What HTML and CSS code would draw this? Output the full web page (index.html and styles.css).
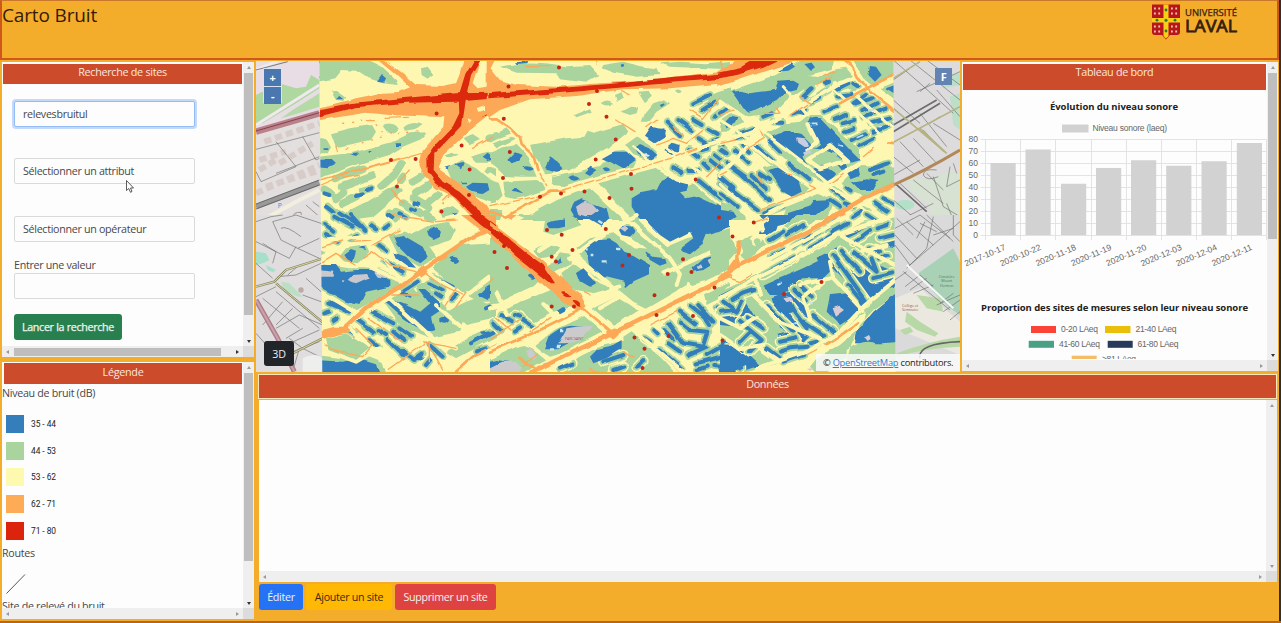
FILE: index.html
```html
<!DOCTYPE html>
<html lang="fr">
<head>
<meta charset="utf-8">
<title>Carto Bruit</title>
<link rel="stylesheet" href="styles.css">
</head>
<body>
<div class="app">
<header class="top">
  <h1>Carto Bruit</h1>
  <svg class="logo" viewBox="0 0 88 36" role="img" aria-label="Université Laval">
    <path d="M0 .5H28V28Q28 31 25 31H18L14 35.500L10 31H3Q0 31 0 28Z" fill="#b9151c"/>
    <path d="M11.500 .5H16.500V32L14 34.500L11.500 32ZM0 14H28V18.500H0Z" fill="#f9cf16"/>
    <g fill="#237a3a"><circle cx="14" cy="6" r="1.400"/><circle cx="14" cy="16.200" r="1.500"/><circle cx="14" cy="27" r="1.400"/><circle cx="5" cy="16.200" r="1.400"/><circle cx="23" cy="16.200" r="1.400"/></g>
    <path d="M2 4.500H10M2 9.500H10M19 4.500H27M19 9.500H27M2 22.500H10M2 27.500H10M19 22.500H27M19 27.500H27" stroke="#efc9a4" stroke-width="1.800" stroke-dasharray="1.800 2.500"/>
    <text x="33" y="12" class="lg1" textLength="52" lengthAdjust="spacingAndGlyphs">UNIVERSITÉ</text>
    <text x="33" y="27.500" class="lg2" textLength="52" lengthAdjust="spacingAndGlyphs">LAVAL</text>
  </svg>
</header>
<div class="main">
  <aside class="side">
    <section class="panel search">
      <div class="view">
        <h2>Recherche de sites</h2>
        <form class="form">
          <div class="field focus">relevesbruitul</div>
          <div class="field">Sélectionner un attribut</div>
          <div class="field">Sélectionner un opérateur</div>
          <label>Entrer une valeur</label>
          <div class="field last"></div>
          <button type="button" class="btn green">Lancer la recherche</button>
        </form>
      </div>
      <div class="vbar"><i class="up"></i><b></b><i class="down dark"></i></div>
      <div class="hbar"><i class="left"></i><b></b><i class="right dark"></i></div>
      <div class="corner"></div>
    </section>
    <section class="panel legend">
      <div class="view">
        <h2>Légende</h2>
        <p>Niveau de bruit (dB)</p>
        <ul>
          <li><span class="sw c1"></span>35 - 44</li>
          <li><span class="sw c2"></span>44 - 53</li>
          <li><span class="sw c3"></span>53 - 62</li>
          <li><span class="sw c4"></span>62 - 71</li>
          <li><span class="sw c5"></span>71 - 80</li>
        </ul>
        <p class="routes">Routes</p>
        <svg class="line" viewBox="0 0 20 20"><path d="M.5 19.500L19 .5" stroke="#444" stroke-width=".9"/></svg>
        <p class="site">Site de relevé du bruit</p>
      </div>
      <div class="vbar"><i class="up"></i><b></b><i class="down dark"></i></div>
      <div class="hbar"><i class="left"></i><i class="right"></i></div>
      <div class="corner"></div>
    </section>
  </aside>
  <div class="center">
    <div class="upper">
      <div class="map">
<svg class="mapsvg" viewBox="256 61 704 311" preserveAspectRatio="none">
<defs><clipPath id="zone"><path d="M319.500 61H893.300L895.500 372H322.300Z"/></clipPath>
<filter id="organic" filterUnits="userSpaceOnUse" x="250" y="55" width="716" height="323" color-interpolation-filters="sRGB"><feTurbulence type="fractalNoise" baseFrequency=".07" numOctaves="1" seed="4"/><feDisplacementMap in="SourceGraphic" scale="5" xChannelSelector="R" yChannelSelector="G"/><feGaussianBlur stdDeviation=".45"/></filter>
<g id="shapeA"><path d="M205 388L225 400M240 415L262 398M260 430L300 410M320 392L345 385M215 440L235 460M240 455L265 470M290 460L330 440M345 455L380 425M400 460L420 475M420 455L450 470M440 430L490 460M470 415L520 445M510 465L530 475M470 365L495 350M480 400L520 375M520 425L545 405"/></g>
<g id="shapeB"><path d="M530 185L570 225M565 180L605 210M610 180L635 195M610 130L660 105M635 150L675 125M675 170L715 140M700 200L720 180M655 210L680 225M625 235L650 250M655 255L680 240M695 260L712 280M600 270L625 290M635 270L655 265M660 300L690 325M640 310L655 325M675 285L690 297M550 325L575 340M595 330L625 330M630 365L690 415M690 370L715 385"/></g>
<g id="shapeC"><path d="M315 70L330 65M350 88L385 70M355 110L395 105M400 70L412 78M300 105L325 90M250 110L275 85M270 125L300 112M310 155L350 140M345 180L375 165M365 190L400 180M220 160L255 145M375 215L400 205M395 240L435 220M420 255L460 235M430 150L470 130M410 130L455 115M430 170L500 145M455 190L510 175M460 215L510 195M400 130L435 105M130 170L155 160M160 185L190 185M60 220L100 205M50 235L75 225M0 160L20 145M5 270L20 280M45 270L85 310M70 255L90 275M110 260L155 300M150 245L180 275M20 310L75 350M60 340L150 420M95 345L140 385M120 340L150 360M0 350L40 385M30 385L115 450M0 400L50 440M205 310L265 360M450 330L505 310M460 345L490 335M380 385L395 395M340 390L370 415M330 420L360 440M375 430L400 440M400 470L430 450M440 455L455 475M465 430L500 455M490 415L520 430M130 460L190 440"/></g>
<g id="shapeD"><path d="M205 25L235 50M235 5L290 35M250 -5L315 35M285 0L325 45M345 30L360 40M385 40L400 30M210 60L245 80M280 70L300 60M370 90L390 105M385 140L440 170M220 265L280 290M205 295L220 290M230 320L245 310M350 290L415 325M270 340L295 355M305 310L325 325M330 335L350 350M340 375L365 395M365 345L390 360M395 375L440 420M415 350L445 375M440 410L475 435M430 340L465 365M480 430L500 415M510 450L530 425M520 390L560 425M445 225L485 200M430 230L460 245M520 205L560 225M530 185L590 215M540 235L555 245M590 250L605 235M645 385L710 350M660 410L690 400M690 280L700 275"/></g>
<g id="shapeE"><path d="M35 300L65 320M75 300L90 305M10 325L30 345M75 350L90 340M100 315L130 335M465 370L480 380M490 345L500 355M525 345L550 370M535 385L570 410M510 405L575 460M535 325L580 385L640 395L655 350L600 345L570 320M570 290L615 325M600 270L650 310M625 270L670 320M640 300L660 330M595 420L650 395M620 445L710 420M650 420L720 380M620 465L650 455M670 450L720 455M340 440L400 420M210 460L250 445M370 465L400 455M440 455L460 435M690 285L720 230M680 280L710 310"/></g>
<g id="shapeF"><path d="M130 180L220 130M155 125L190 105M150 75L190 50M200 60L250 30M220 95L270 60M270 100L340 60M340 50L385 25M250 80L300 50M320 40L350 20M380 60L440 30M400 80L430 65M450 100L480 110M430 60L450 45M480 130L500 120M440 0L470 20M470 40L500 30M480 70L520 60M340 120L440 260M365 110L420 170M405 115L470 170L455 130M460 190L520 175M35 255L70 235L100 225M10 260L50 290L65 260M0 290L40 285M85 310L130 340M60 320L125 375L90 410M140 270L220 350M200 260L260 340M220 220L260 260M240 210L275 245M280 300L340 350M250 320L310 360M180 380L230 370M180 410L210 400L260 395M140 400L190 440L250 420M30 430L60 460M20 400L70 430M60 380L90 350M270 385L290 380M385 210L430 265"/></g>
</defs>
<!-- Fond de carte -->
<rect x="256" y="61" width="704" height="311" fill="#e2dfde"/>
<g transform="translate(256 60) scale(.33333)">
  <path d="M0 0H190V170L0 225Z" fill="#e8dde5"/>
  <path d="M0 105L70 70 120 85 150 80 165 45 190 60V85L120 130 20 190 0 190Z" fill="#afd7a0"/><path d="M75 175L110 150 190 100V140L110 165Z" fill="#b4daa5"/>
  <path d="M0 195L190 75M0 30L70 0" stroke="#f0e9ed" stroke-width="9"/><path d="M0 30L95 5" stroke="#444" stroke-width="2"/>
  <path d="M0 215L190 160" stroke="#b9828b" stroke-width="20"/><path d="M0 213L190 158" stroke="#8a3f4b" stroke-width="3"/>
  <g stroke="#d8ccc9" stroke-width="18" stroke-dasharray="22 12"><path d="M25 245L190 190M10 300L90 275M70 310L170 250M0 400L190 315M10 330L60 300M30 380L180 335"/></g>
  <path d="M0 268L190 218M60 245L120 320 15 365 0 335M140 230L180 300 190 295M60 340L190 290" class="rd"/>
  <path d="M0 440L190 368" stroke="#999" stroke-width="17"/><path d="M0 432L190 360M0 447L190 375" stroke="#4f4f4f" stroke-width="2"/>
  <path d="M20 480L130 420 190 390" stroke="#f3efdf" stroke-width="12"/><path d="M150 435L190 470M170 425L190 440M110 475q0-20 25-18q5 14-15 20" class="rd"/>
  <path d="M190 0L202 42 190 52" stroke="#3975bb" stroke-width="3" fill="none"/><text x="65" y="444" class="park">P</text>
</g>
<g transform="translate(256 215) scale(.33333)">
  <path d="M0 0H200V470H0Z" fill="#dfdddd"/>
  <path d="M0 110L30 115 40 135 20 145 0 150Z" fill="#a6dfca"/><path d="M30 150L60 165 50 172 35 165Z" fill="#a6dfca"/><path d="M75 200L100 205 140 245 125 245 85 225Z" fill="#bbdfc5"/><circle cx="135" cy="225" r="8" fill="#bba9a6"/>
  <g class="rd"><path d="M0 20L45 5 80 0M50 20L120 0 195 25M50 20L75 75 125 100 190 70M75 40q15-10 60 25M125 100L190 130M120 95L100 130 0 80M20 85L60 110 50 145M0 145L50 190M65 185L120 180 195 145M95 180L130 150M0 245L60 215M20 250L130 340M60 230L190 340M80 260L20 330M110 280L60 330M0 355L40 400M60 340L130 300 200 330M90 390L190 345M140 340L90 370M110 410L190 380M100 370L140 400 200 430M130 400L110 470M150 190L195 230M140 240L195 260"/></g>
  <path d="M0 215L55 200 90 165 200 130M60 205L200 322M60 440L200 370" stroke="#8b895f" stroke-width="7" fill="none"/><path d="M0 215L55 200 90 165 200 130M60 205L200 322M60 440L200 370" stroke="#d9d6ae" stroke-width="3" fill="none"/>
  <path d="M0 255L65 370 115 470" stroke="#ae7e89" stroke-width="15" fill="none"/><path d="M0 255L65 370 115 470" stroke="#c9a3ad" stroke-width="6" fill="none"/>
  <path d="M140 430Q180 410 200 430V470H140Z" fill="#eeeeec"/>
</g>
<g transform="translate(720 60) scale(.33333)">
  <path d="M510 0H720V480H510Z" fill="#dddbdc"/><path d="M690 110L720 100V210L700 195ZM660 50L720 40V75L670 85Z" fill="#bcdfc8"/><path d="M560 350L620 360 690 330 720 345V480H640L620 430 570 390Z" fill="#d7e2d2"/><ellipse cx="555" cy="435" rx="28" ry="15" fill="#b2e1c7"/>
  <g class="rd"><path d="M520 0L600 70 700 160M570 0L720 120M620 0L720 75M590 95L720 35M520 60L570 25M630 70L600 95M650 90L720 170M520 120L600 190M600 160L680 260M640 190L720 240M580 235L650 310M540 245L610 320M520 290L580 340M610 210L670 275M520 345L600 300M660 170L630 190M540 370L620 445M620 340L670 390M580 360L670 430M640 350L670 440 720 470M690 320L680 380 720 360M700 310L710 340M650 330q-40-5-40 15q10 20 45 5M520 420L590 480M560 470L640 430M680 430L700 480"/></g>
  <path d="M520 215L660 130M520 195L650 120M525 370L620 455" stroke="#6d6d6d" stroke-width="5"/><path d="M520 247L720 140M520 55L600 5M520 145L680 280M600 205L680 280" stroke="#b5b382" stroke-width="5"/><path d="M520 375Q610 335 720 270" stroke="#b38858" stroke-width="9" fill="none"/>
</g>
<g transform="translate(720 215) scale(.33333)">
  <path d="M515 0H720V470H515Z" fill="#dbdada"/><path d="M595 175L700 100 720 140V300L690 280 640 230Z" fill="#a9d1b6"/><path d="M525 250L600 220 720 320V420L600 370 525 340Z" fill="#ebe9df"/><path d="M555 320L560 290 600 320 655 355 645 365 590 345ZM540 345L570 335 580 350 555 360ZM530 415Q620 380 720 365V395Q610 400 530 425ZM590 240L660 250 670 290 620 280Z" fill="#b9d8a7"/>
  <g class="rd"><path d="M525 40L600 0M560 20L640 90M600 0L690 70M640 5L620 100 560 160M525 90L570 150 720 20M525 60L590 130M590 70L615 20M640 60L700 40M550 170L690 285M525 195L560 170M555 215L600 180 640 215M570 225L620 190M580 235L640 210M650 270L720 240M670 290L720 255M660 265L700 235M690 315L720 290M700 0V60L720 80M620 0L700 80M530 10L580 60M600 25L650 50"/></g>
  <path d="M560 150L700 280" stroke="#f7f7f7" stroke-width="6"/><path d="M600 430Q590 385 720 380" stroke="#666" stroke-width="5" fill="none"/>
  <text x="680" y="188" class="mp g1">Cimetière</text><text x="680" y="202" class="mp g1">Mount</text><text x="680" y="216" class="mp g1">Hermon</text><text x="570" y="275" class="mp r1">Collège et</text><text x="570" y="289" class="mp r1">Séminaire</text>
</g>
<!-- Niveaux de bruit -->
<g clip-path="url(#zone)">
<g filter="url(#organic)">
<path d="M250 50H910V380H250Z" class="y"/>
<g transform="translate(256 60) scale(.33333)">
  <path class="g" d="M170 -10H320L372 15 420 58 425 75 380 70 335 55 300 32 255 30 235 55 190 65H170ZM225 95Q245 88 268 110L262 122 240 120ZM495 25L515 20 532 42 515 56 497 45ZM380 198Q400 180 428 205 420 222 395 218ZM225 220L290 203 348 195 360 215 345 240 240 262ZM170 235H210L225 262 215 280H170ZM170 292L290 278 420 242 465 220 515 217 495 238 440 260 400 285 300 315 190 355H170ZM445 203Q470 180 497 195 480 210 450 212ZM285 455L400 385 425 375 438 395 350 470 280 480ZM620 235L650 222 675 240 640 256ZM565 285L590 275 608 285 580 292ZM575 325L615 303 660 325 720 375V435L650 405 590 360ZM645 290L695 275 720 280V305L660 305ZM550 450L590 435 610 450 600 475H560ZM695 320L720 330V360L685 335Z"/>
  <path d="M435 312L415 345 375 380M240 355L320 325M300 365L350 345M260 380L300 365M435 360L442 350M700 235L720 225" class="gs"/>
  <use href="#shapeA" class="gs"/><path d="M210 440l20 15M235 460l25 12M205 400l15 5M395 465l15 10M430 460l20 12M465 445l12 5M475 430l12 4M300 408l20-5M335 390l12-5" class="bs"/>
  <path class="b" d="M360 65L375 45 390 58 385 68ZM240 118L250 108 262 118ZM180 300L225 298 240 312 215 325 180 320ZM283 283L310 280 300 288ZM415 250h20v8h-15ZM680 290L695 278 712 292 695 300ZM595 315L620 308 612 328ZM565 323l18-5-5 10ZM630 380L650 368 695 370 700 390 680 402 645 395ZM615 365h18v5h-15ZM588 462l15-4-5 12ZM205 265h12v5h-10ZM338 270h8v5h-8Z"/>
  <path class="o" d="M170 148L300 115 380 98 430 96 465 82 420 40 360 -10H375L440 40 480 75 560 78 600 70 612 40 625 -10H675L650 70 665 85 720 75V150L640 212 562 285 545 325 610 370 690 435 720 480H655L590 410 540 385 505 350 490 315 500 272 562 200 565 172 400 165 330 158 170 184Z"/>
  <path class="y" d="M665 30Q690 0 720 10V70L670 68ZM665 145L690 135 690 150 670 155ZM635 175l12 5-8 10Z"/>
  <path class="os" d="M190 360L290 335 440 295 500 280M430 295L300 330 195 375M405 390L440 430M460 330L425 370M540 355L590 390 560 420M240 260L245 275M310 345L260 355M650 265L710 230M390 175L460 172M330 182h25"/><path class="os" stroke-dasharray="3 24" d="M260 190L350 180 380 220 500 215M270 265L380 230M400 300L480 290M560 430L600 380 650 430"/>
  <path class="r" d="M170 152L280 130 420 116 600 100 720 98V115L600 125 450 128 300 142 170 174ZM660 -10H678L645 45 632 105 618 195 575 240 532 285 530 330 560 365 610 395 660 440 685 480H665L600 415 540 370 515 335 514 290 540 252 590 200 610 160 608 110 628 45Z"/><path d="M680 172L705 157" stroke="#dc260b" stroke-width="3"/>
</g>
<g transform="translate(490 60) scale(.33333)">
  <path class="g" d="M30 20Q120 0 230 22L300 18 325 45 290 65 210 55 200 40 80 38ZM340 15L400 5 460 20 500 25 508 45 440 50 370 38 335 25ZM510 10L570 5 650 10 720 3V28L650 25 540 20ZM120 255L230 235 280 230 290 212 310 218 400 192 415 215 330 285 250 330 190 350 165 340 130 280ZM250 165L300 145 305 155 260 172ZM332 132q20-15 38 0q-20 15-38 0ZM445 98L480 95 485 110 465 130ZM392 155L420 140 445 142 440 160 420 165ZM455 185L465 160 490 130 525 118 540 130 500 155 475 185ZM555 92q10-8 20 2q-8 12-20-2ZM375 105l20-8 5 15-20 12ZM0 280L40 262 80 255 115 290 140 350 90 350 45 348 15 320 0 310ZM0 360L30 370 45 400 25 420 0 435ZM40 365L140 360 170 375 165 390 120 405 70 430 45 415ZM0 450L40 450 30 480H0ZM90 480L220 410 300 385 400 480ZM325 370L510 320 590 380 610 370 690 440 720 450V480H430L380 430ZM185 375L190 352 260 335 330 318 375 272 400 270 440 300 430 320 330 345 220 378ZM405 255L440 230 480 255 500 275 500 295 470 300 430 285ZM20 220l30-15 15 15-40 15ZM5 250l60-20 15 5-60 30ZM650 110L720 85V100L655 140Z"/>
  <use href="#shapeB" class="gs"/><use href="#shapeB" class="bs"/>
  <path class="b" d="M465 230L485 200 525 210 520 235 495 250ZM433 265L450 252 480 265 502 285 485 298 445 285ZM335 295L370 275 410 275 437 300 400 328 360 305ZM165 325L180 292 200 305 222 330 200 335ZM285 340L305 320 322 330 300 348ZM238 352q20-15 33 5q-20 12-33-5ZM338 325q15-8 23 5q-15 10-23-5ZM55 300L75 280 95 288 85 302 65 310ZM97 322q20-8 35 5q-15 12-35-5ZM65 395L75 385 100 403ZM425 415L450 400 500 390 515 360 535 350 595 372 590 395 570 400 585 415 620 408 690 440 720 448V480H450L425 440ZM242 450L250 430 275 418 305 428 350 445 358 480H260ZM490 210l30-5 5 25-30 15ZM520 270L545 248 572 255 570 275 545 285ZM75 7L118 3 115 10 80 12ZM395 14l8-3 3 7-8 4ZM510 135l15-8 3 8-15 6Z"/>
  <path d="M258 440L285 422 310 430 328 450 295 475 265 462Z" fill="#ccc6cb"/><path d="M445 265q-7 0-5 5q10 5 5-5M460 282q10-5 20 2q-10 7-20-2" fill="#d7edf0"/>
  <path class="yw" d="M0 345L30 365 45 415 90 425M165 345L240 335 400 240 460 200 510 170M430 260L500 320 560 360 600 370M300 380L400 470M560 280L720 410M510 250L610 320"/>
  <path class="yr" d="M0 440L180 400 330 360 560 290 720 230M0 190L45 190 95 250 140 300 165 370 180 400"/>
  <path class="om" d="M0 178L20 178 60 205 90 235 95 255 135 290 145 330M50 470L180 395 220 395M0 455L50 470"/><path class="os" stroke-dasharray="28 8" d="M150 340L170 380M215 390L560 290 620 265M0 440L180 400"/><path class="os" d="M380 180L435 215M470 200L500 178M500 255L550 235 590 250 640 210M600 150L640 175 690 110 720 130M550 200L580 225M720 60L690 0M650 350L690 310M320 0V15M110 20h70M395 92l25 12"/>
  <path class="o" d="M-10 0H15L2 25 30 60 80 75 200 80 330 70 500 60 720 32V68L540 85 400 88 260 108 120 118 30 150 0 170H-10Z"/>
  <path class="r" d="M-5 100L220 83 400 68 540 55 720 38V55L560 67 420 80 200 100 -5 115Z"/>
</g>
<g transform="translate(720 60) scale(.33333)">
  <path class="g" d="M0 105L80 75 170 45 260 -10H345L335 30 260 50 300 55 340 30 390 20 430 65 400 100 350 60 300 70 250 90 200 120 160 160 80 170 20 130 0 125ZM390 -10H540V50L460 80 435 60 410 20ZM480 85L540 60V130ZM130 225L200 190 240 185 265 165 300 165 420 270 420 310 380 325 350 360 310 365 250 340 200 300 150 260ZM130 320L170 310 235 350 265 385 240 415 190 400 150 350ZM0 425L30 435 80 470 80 480H0ZM190 470L200 440 300 400 340 420 320 480H190ZM365 370L420 315 540 320V370L440 410 380 390ZM0 180L30 160 60 170 70 190 20 215 0 215ZM470 360l50-20h20v25l-60 20Z"/>
  <use href="#shapeC" class="gs"/><use href="#shapeC" class="bs"/>
  <path class="b" d="M35 95L60 92 90 100 165 90 175 65 220 62 237 72 230 90 190 100 170 120 90 158 70 145 50 115ZM170 35L215 10 225 20 205 32ZM250 12L275 8 285 22 270 33ZM445 45L450 18 468 20 485 45 465 65ZM497 85L540 70V110ZM155 230L195 213 245 225 285 265 300 255 262 190 270 172 300 175 390 270 420 300 385 310 330 275 280 265 250 290 265 315 240 295 190 255ZM270 330L310 315 345 340 325 362 300 358ZM345 305L380 310 385 325 365 330ZM385 340L415 322 420 345 395 355ZM395 365L440 358 475 362 460 390 420 390ZM145 330L180 320 235 360 245 395 215 410 190 395ZM12 190L30 170 52 175 45 190 20 205ZM0 450L40 455 50 470 35 480H0ZM205 460L265 440 280 420 325 418 325 435 280 470 270 480H205ZM215 155L240 140 260 150 250 165Z"/>
  <path class="yr" d="M265 195L290 245 265 270M265 300L330 255 385 305 350 310 300 325 265 300"/><path class="g" d="M275 298L320 270 350 280 355 300 320 300 300 315Z"/>
  <path class="yw" d="M0 120L110 200 240 300 330 375M345 90L540 275M190 80L265 165M0 240L90 250 150 300 280 390M110 250L0 180M400 100L540 225M0 370L110 470M330 380L420 440 470 480"/>
  <path class="yr" d="M0 250L130 200 260 130 360 70 410 50M380 20L440 90 520 140M440 90L540 40M0 345L80 260M110 480L280 390 400 320 540 240M320 480L540 365"/>
  <path class="om" d="M365 0L395 20 410 50 440 85 540 165M440 85L540 35M360 130L440 85M505 250L540 255"/><path class="ob" d="M320 480L440 410 540 365"/><path class="os" d="M0 250L50 240M130 160L180 160 170 145M210 165L260 130M290 75L340 50M80 265L130 235 120 210M120 450L290 385 265 375M330 370L370 340M430 290L460 265M0 345L20 335M110 335L130 370M190 340L215 345M0 165L40 150M240 110l30 20M310 50l40-18"/>
  <path d="M230 235L255 238 268 255 255 262 235 248ZM252 278l20-10 5 10-20 8Z" fill="#c8cde2"/><path d="M275 193h18M355 255l12 4M410 230l20-8M445 150h15M478 200h8" stroke="#bfe3ee" stroke-width="5"/>
  <path class="o" d="M-5 35L60 -10H235L215 8 150 30 90 48 -5 80Z"/><path class="r" d="M-5 38L60 25 115 -8H190L130 20 60 42 -5 56Z"/>
</g>
<g transform="translate(256 215) scale(.33333)">
  <path class="g" d="M400 60L430 40 520 90 545 125 490 155 430 120ZM465 60L520 30 580 20 600 45 580 75 530 95 480 85ZM530 160L560 125 620 90 720 85V165L620 240ZM180 145L280 160 370 160 430 190 430 215 390 235 300 290 180 220ZM370 245L430 230 520 285 560 260 620 320 610 350 520 370 440 340ZM580 285L630 260 660 250 720 280V310L630 330ZM620 235L710 180 720 190V260L670 260ZM570 410L640 365 720 330V365L600 430ZM210 370L270 355 340 400 300 430 220 415ZM180 420L260 430 330 420 380 440 395 490H180ZM480 215L510 200 540 240 500 260ZM180 95L210 110 180 125ZM250 125L270 100 330 90 340 110 300 150 270 145ZM430 235L470 220 530 265 500 285Z"/>
  <use href="#shapeD" class="gs"/><use href="#shapeD" class="bs"/>
  <path class="b" d="M415 65L440 60 500 95 515 125 490 145 460 125 425 90ZM412 112L450 125 480 158 455 155 420 130ZM510 50L530 35 555 50 550 65 530 75 515 65ZM580 130q15-12 30 5q-10 20-30-5ZM265 120L285 105 300 110 290 145 275 135ZM308 100L325 92 330 105ZM180 150L240 150 255 170 300 165 360 165 400 195 400 215 330 230 310 270 270 260 180 210ZM385 260L410 255 450 270 490 290 520 265 490 225 510 225 555 265 555 285 525 305 535 345 520 350 480 335 430 300ZM550 310q15-10 30 5q-10 20-30 5ZM665 240L690 215 715 200 710 230 695 255ZM180 435L260 440 310 430 360 445 375 490H180ZM220 255L285 285 270 295 225 270ZM480 425q10-10 25 0q-10 15-25 0ZM675 350L700 346 700 355 680 357Z"/>
  <path d="M190 165L232 170 230 185 190 185ZM275 195L290 180 330 177 338 188 300 205ZM355 170L380 172 392 190 365 185ZM255 195l8 2-6 6Z" fill="#c9c9cd"/>
  <path class="yr" d="M430 230L270 330 180 375M545 138L560 130M390 240L530 370 600 400M345 90L430 190M180 135L340 155 435 200M500 165L620 240M580 280L720 175M180 222L310 300M540 270L620 340 720 320M490 370L560 470M270 330L420 470M180 395L300 440 370 400M180 80L420 50 620 0"/>
  <path class="ob" d="M180 370L260 345 330 280 430 215 500 165 560 125 640 70 720 35"/><path class="o" d="M180 350L235 335 270 335 285 350 240 360 180 378ZM485 165L500 150 515 170 495 185ZM545 130L565 118 575 130 555 142Z"/><path class="om" d="M600 470L650 425 720 390"/><path class="os" d="M400 460L510 380 540 430 560 465M500 380L600 400M200 140L240 115 300 150M320 130L350 110 400 150 480 170M345 75L280 80M210 390L250 410 320 425 350 390 300 340M505 170L560 210 620 240M600 275L630 235M570 270L600 220M410 240L490 240M340 310L440 380M410 0L540 20 600 15M200 95L260 75M520 380V440M350 90L430 45"/>
  <path class="o" d="M615 0H720V65L680 50Z"/><path class="r" d="M640 0H680L720 30V55L680 35Z"/>
</g>
<g transform="translate(490 215) scale(.33333)">
  <path class="g" d="M0 40L60 80 120 150 150 195 130 215 40 260 0 265ZM130 105Q165 80 210 100 200 125 150 130ZM175 155L210 115 245 120 245 145 190 170ZM165 15L260 5 275 30 190 60 160 50ZM80 0H220L180 10 120 15ZM210 175L250 145 330 205 365 220 310 235 260 225 220 200ZM260 100L300 70 370 55 430 100 530 110 600 170 590 210 470 280 430 260 380 220 320 190 265 125ZM395 20L430 5 530 95 590 70 720 40V170L610 210 560 180 480 110 400 50ZM45 280L180 225 250 275 190 290 100 345 50 310ZM310 280L380 245 430 275 445 285 350 345 300 300ZM130 395L200 340 280 300 340 350 250 405 180 425ZM190 485L300 400 410 375 410 410 340 485ZM0 420L100 390 150 410 170 440 150 460 0 485ZM400 365L430 345 470 380 570 490H410ZM520 180l60-30 15 50-50 10ZM0 180L20 190 20 230 0 240ZM440 65q20-10 35 0q-10 25-35 0ZM640 230l60-25 20 0v30l-70 35Z"/>
  <use href="#shapeE" class="ys"/><use href="#shapeE" class="gs"/><use href="#shapeE" class="bs"/>
  <path class="b" d="M170 22L190 15 225 10 225 35 205 40 180 40ZM245 0H350L355 15 335 35 300 15ZM387 45L400 30 425 35 435 50 420 65 395 60ZM455 0H720V35L650 60 640 85 600 118 575 110 570 100 610 70 600 50 540 80 510 60 480 30ZM278 98L310 82 330 72 355 70 380 85 400 110 430 120 480 150 480 175 435 195 405 220 400 200 340 185 300 150 295 120ZM467 110L490 125 525 130 530 145 510 152 480 135ZM605 160L640 130 680 120 680 140 640 165 610 170ZM257 175L280 160 310 190 318 205 300 215 265 195ZM110 180q15-10 28 5q-12 15-28-5ZM200 285L220 272 228 285 210 295ZM165 400L180 360 210 340 240 332 280 335 240 380 205 400ZM300 425L320 405 360 395 395 375 395 400 350 430 310 445ZM0 440L20 435 60 440 90 490H0ZM200 140l15-10 2 12-12 6Z"/>
  <path d="M205 385L230 340 260 335 308 332 300 345 285 360 270 380 220 385ZM0 460L40 440 80 440 95 455 80 490H0ZM105 405L120 400 140 425 130 435 115 425ZM390 40l15-8 10 8-10 10ZM650 135l15-8 5 15-15 5ZM620 155l10-7 5 10-10 5ZM275 0H290L300 8Z" fill="#cbcbce"/><path d="M290 103h6M305 120h8M335 142h15M378 102h10M180 400h12M210 345h10M325 20l12 8M200 393h10" stroke="#c6e6f2" stroke-width="7"/>
  <path class="yr" d="M190 80L280 35M150 105L190 80 250 115 370 220 450 285M400 0L540 130 570 175 560 210M240 130L350 50 440 0M520 175L600 140 720 85M280 265L350 230 385 215M330 280L390 245M0 280L140 215M20 235L50 300M190 300L160 270M400 320L580 470M450 300L520 350M110 380L170 430"/>
  <path class="yx" d="M0 415L280 285M140 470L370 355 720 180M270 270L370 355"/>
  <path class="ob" d="M90 490L250 410 370 355 480 300 720 182"/><path class="om" d="M0 410L150 345 280 280L370 355M85 425L130 460"/>
  <path class="o" d="M0 20L60 65 150 130 210 185 270 235 290 275 260 290 220 260 160 210 90 145 0 65ZM350 350L375 340 390 355 370 375ZM50 0H80L65 12Z"/>
  <path class="r" d="M0 32L50 65 110 115 160 150 195 205 180 205 130 165 80 125 0 52ZM213 230Q230 225 245 242 225 248 213 230ZM248 255Q270 252 275 278 255 278 248 255Z"/>
  <path class="os" d="M0 370L60 330 95 315M60 345L20 310M400 410L430 430M480 330L560 290M300 460L320 470M100 450L140 420M0 200L10 190M280 230L300 240M120 350L180 310"/>
</g>
<g transform="translate(720 215) scale(.33333)">
  <path class="g" d="M-30 80L0 65 40 75 50 110 0 165-30 175ZM55 70L110 60 140 80 80 140 60 120ZM230 0H320L60 130 150 70ZM0 230L130 170 340 60 550 -10V215L420 300 330 380 200 440 0 490Z"/>
  <path class="b" d="M115 0H230L210 20 170 30 160 60 120 60 130 20ZM130 215L200 185 310 130 360 120 520 210 410 270 400 220 340 160 310 190 250 190 190 240 150 240ZM430 130L545 180V215L480 220ZM0 240L40 220 80 260 110 310 90 340 0 330ZM155 250L210 230 260 260 280 350 250 380 180 340ZM330 240L380 235 415 270 415 295 360 330 320 290ZM170 360L210 350 245 370 200 400ZM0 380L40 380 120 450 0 490ZM545 220V380L480 390 405 385 410 350 460 290ZM290 130L350 100 360 115 300 150ZM480 90L545 70V100Z"/>
  <use href="#shapeF" class="ys"/><use href="#shapeF" class="gs"/><use href="#shapeF" class="bs"/>
  <path class="b" d="M130 212L180 190 260 155 320 130 330 150 290 180 240 185 195 205 150 235ZM158 255L190 238 210 250 225 285 200 300 170 280ZM335 248L375 242 408 270 405 292 362 318 335 285ZM0 388L35 390 100 440 40 470 0 470Z"/>
  <path class="yr" d="M0 210L60 180 380 5M50 75L60 110 30 170M60 70L140 10M0 250L110 190 210 140 350 60 545 -5M360 60L450 110 545 160M330 140L340 190 430 285M110 200L120 240M240 210L330 190M100 240L180 320 300 370M0 310L60 340 110 310M0 360L60 400 130 390M120 400L180 440M310 200L250 250 270 310M430 110L500 90M130 50L120 15"/><path class="y" d="M90 70Q110 45 130 75 115 100 95 90Z"/><circle cx="113" cy="82" r="12" class="g"/>
  <path class="g" d="M545 200L480 245 440 285 430 330 360 390 290 430 270 455 300 490 380 425 420 330 460 285 545 225ZM380 405Q430 370 470 385 500 385 547 378V440H380Z"/>
  <path d="M545 180L435 270 360 350 260 410 110 460" class="yr"/><path class="ob" d="M0 190L50 155 130 115 240 60 370 -5"/><path class="o" d="M20 165L45 130 50 80 62 75 62 95 55 125 60 145 40 165Z"/><path class="om" d="M320 388L370 355 412 325"/><path class="os" d="M260 418L290 402M100 25L140 10M0 180L60 200 95 180"/>
  <path d="M335 280L355 272 372 285 345 305ZM435 368l15-8 5 10-12 8ZM190 250L215 245 220 255 200 262ZM260 462l20-4-8 10Z" fill="#d9cbd5"/><path d="M270 268h8M220 325h8M175 210l10-5" stroke="#c6e6f2" stroke-width="6"/>
</g>
</g>
<text x="574" y="339.500" class="pk">PARC SAINT</text>
<path class="pts" d="M436.600 113.500h0M461.600 145.500h0M391 160h0M415.600 159h0M397 186.600h0M469.600 169.500h0M469 195h0M441.500 211.500h0M559 67.500h0M508.500 86.500h0M597 91h0M589 104h0M606.500 116.800h0M503.800 118.800h0M615.700 139.500h0M509.800 152h0M595.700 159.500h0M503 178h0M631 174h0M631.500 188.700h0M695.700 179.500h0M584.500 191.500h0M561 193.500h0M540 196.700h0M609.500 198h0M719 217.500h0M547 230h0M561.700 234.700h0M605.800 229h0M572.500 250h0M551.700 256.700h0M556 261.500h0M504 246h0M494.500 252h0M507 268h0M551.700 306.500h0M574 306.500h0M622.500 265.500h0M629 255h0M683 259.300h0M691.500 272h0M667.700 274h0M654.500 295.300h0M656.500 315h0M714.500 287.500h0M693 316h0M668.500 336h0M634.500 337.500h0M644.500 348.700h0M642.500 368h0M722.500 340.500h0M732.500 236.500h0M753.700 222.500h0M821.500 282h0M784 294h0"/>
</g>
</svg>
        <div class="zoom"><span>+</span><span>-</span></div>
        <div class="full">F</div>
        <div class="three">3D</div>
        <div class="attr">© <a>OpenStreetMap</a> contributors.</div>
      </div>
      <section class="panel dash">
        <div class="view">
          <h2>Tableau de bord</h2>
          <svg class="chart" viewBox="963 90 304 269" width="304" height="269">
            <text x="1114" y="110" class="ct" textLength="128">Évolution du niveau sonore</text>
            <rect x="1062" y="124.500" width="26.500" height="8" fill="#d1d1d1"/><text x="1092.500" y="131" class="cl" textLength="74.500">Niveau sonore (laeq)</text>
            <path d="M980.500 139.500H1267M980.500 151.500H1267M980.500 163.500H1267M980.500 175.500H1267M980.500 187.500H1267M980.500 199.500H1267M980.500 211.500H1267M980.500 223.500H1267M980.500 235.500H1267M985.500 139V240M1020.500 139V240M1055.500 139V240M1091.500 139V240M1126.500 139V240M1161.500 139V240M1196.500 139V240M1231.500 139V240M1266.500 139V240" stroke="#e3e3e3" fill="none"/>
            <path d="M990.500 163h25.200v72h-25.200ZM1025.500 149.500h25.200v85.500h-25.200ZM1061 183.700h25.200v51.300h-25.200ZM1096 168h25.200v67h-25.200ZM1131 160.300h25.200v74.700h-25.200ZM1166.200 165.800h25.200v69.200h-25.200ZM1201.500 161.300h25.200v73.700h-25.200ZM1236.800 143h25.200v92h-25.200Z" fill="#d2d2d2"/>
            <g class="cy"><text x="978" y="142">80</text><text x="978" y="154">70</text><text x="978" y="166">60</text><text x="978" y="178">50</text><text x="978" y="190">40</text><text x="978" y="202">30</text><text x="978" y="214">20</text><text x="978" y="226">10</text><text x="978" y="238">0</text></g>
            <g class="cx"><text transform="translate(1006 249.500) rotate(-23)">2017-10-17</text><text transform="translate(1041.500 249.500) rotate(-23)">2020-10-22</text><text transform="translate(1076.700 249.500) rotate(-23)">2020-11-18</text><text transform="translate(1112 249.500) rotate(-23)">2020-11-19</text><text transform="translate(1147 249.500) rotate(-23)">2020-11-20</text><text transform="translate(1182.300 249.500) rotate(-23)">2020-12-03</text><text transform="translate(1217.500 249.500) rotate(-23)">2020-12-04</text><text transform="translate(1252.700 249.500) rotate(-23)">2020-12-11</text></g>
            <text x="1114.500" y="311" class="ct" textLength="267">Proportion des sites de mesures selon leur niveau sonore</text>
            <path fill="#fb4437" d="M1031 326h25v7h-25Z"/><path fill="#e9bf0b" d="M1105 326h25.500v7h-25.500Z"/><path fill="#4aa085" d="M1028.700 340.800h25.300v7h-25.300Z"/><path fill="#263a5c" d="M1107.700 340.800h25v7h-25Z"/><path fill="#f4bd6a" d="M1071.700 355.700h25v7h-25Z"/>
            <g class="cl"><text x="1061" y="332" textLength="37">0-20 LAeq</text><text x="1135.500" y="332" textLength="41">21-40 LAeq</text><text x="1059" y="347" textLength="41">41-60 LAeq</text><text x="1137.500" y="347" textLength="41">61-80 LAeq</text><text x="1102" y="361.500" textLength="34">&gt;81 LAeq</text></g>
          </svg>
        </div>
        <div class="vbar"><i class="up"></i><b></b><i class="down dark"></i></div>
        <div class="hbar"><i class="left"></i><i class="right"></i></div>
        <div class="corner"></div>
      </section>
    </div>
    <section class="data">
      <h2>Données</h2>
      <div class="panel table">
        <div class="view"></div>
        <div class="vbar"><i class="up"></i><i class="down"></i></div>
        <div class="hbar"><i class="left"></i><i class="right"></i></div>
        <div class="corner"></div>
      </div>
      <div class="actions"><button class="btn blue">Éditer</button><button class="btn yellow">Ajouter un site</button><button class="btn red">Supprimer un site</button></div>
    </section>
  </div>
</div>
<div class="edge"></div>
<svg class="cursor" viewBox="0 0 8 13"><path d="M.5 .5V10.500L2.800 8.500L4.500 12.300L6 11.500L4.500 8H7.500Z" fill="#fff" stroke="#333" stroke-width=".8"/></svg>
</div>
</body>
</html>
```
FILE: styles.css
```css
* { box-sizing: border-box; }
body { margin: 0; font-family: "Open Sans", "Noto Sans", sans-serif; font-size: 10.700px; letter-spacing: -.3px; color: #484848; }
.app { position: relative; width: 1281px; height: 623px; overflow: hidden; background: #f4ad2b; display: flex; flex-direction: column; border-bottom: 2px solid #bb6417; }
.top { height: 60px; flex: none; display: flex; justify-content: space-between; border: 2px solid #cf571c; border-top-color: #c9772b; border-top-width: 1px; margin-right: 2px; padding: 0 37px 0 0; }
h1 { margin: 0; font-size: 19px; font-weight: 400; line-height: 29px; color: #351b08; letter-spacing: -.15px; }
.logo { width: 88px; height: 36px; margin-top: 3px; }
.lg1 { font: 8.500px "Open Sans", sans-serif; fill: #3d230c; stroke: #3d230c; stroke-width: .25; letter-spacing: 0; }
.lg2 { font: 17px "Open Sans", sans-serif; fill: #35200e; stroke: #35200e; stroke-width: .8; letter-spacing: 0; }
.main { flex: 1; display: flex; min-height: 0; }
.side { width: 256px; padding: 2px 2px 0; display: flex; flex-direction: column; gap: 5px; }
.panel { display: grid; grid-template: minmax(0, 1fr) 11px / minmax(0, 1fr) 11px; background: #fdfdfd; }
.view { overflow: hidden; }
h2 { margin: 2px 1px 0; height: 20px; background: #cb4b2b; color: #fbe8df; font-size: 10.800px; font-weight: 400; line-height: 17px; text-align: center; letter-spacing: -.3px; }
.search { height: 295px; width: 252px; }
.legend { height: 257px; width: 252px; }
.legend h2 { margin: 1px 1px 0 2px; height: 21px; line-height: 18px; }
.vbar, .hbar { background: #efefef; display: flex; align-items: center; justify-content: space-between; }
.vbar { flex-direction: column; padding: 4px 0 3px; }
.hbar { padding: 0 4px; }
.corner { background: #dcdcdc; }
.vbar b { width: 9px; background: #bebebe; }
.search .vbar b { height: 242px; margin: 4px 0 auto; }
.legend .vbar b { height: 188px; margin: 4px 0 auto; }
.dash .vbar b { height: 166px; margin: 4px 0 auto; }
.search .hbar b { height: 8px; width: 207px; background: #bebebe; margin: 0 auto 0 5px; }
.vbar i, .hbar i { border: 2px solid transparent; width: 0; height: 0; flex: none; }
.up { border-bottom: 3px solid #999 !important; border-top: 0 !important; }
.down { border-top: 3px solid #999 !important; border-bottom: 0 !important; }
.left { border-right: 3px solid #999 !important; border-left: 0 !important; }
.right { border-left: 3px solid #999 !important; border-right: 0 !important; }
.down.dark { border-top-color: #333 !important; }
.right.dark { border-left-color: #333 !important; }
.form { padding: 17px 12px 0; display: flex; flex-direction: column; }
.field { width: 181px; height: 26px; flex: none; border: 1px solid #d8dadc; border-radius: 2px; background: #fdfdfd; padding-left: 8px; line-height: 24px; margin-bottom: 32px; }
.field:first-child { margin-bottom: 31px; }
.field:nth-child(3) { margin-bottom: 15px; }
.field.focus { border-color: #93bbf5; box-shadow: 0 0 0 2px #c5d9f8; }
label { line-height: 16px; }
.field.last { margin-bottom: 15px; }
.btn { border: 0; border-radius: 3px; height: 26px; padding: 0; font: 10.700px "Open Sans", sans-serif; letter-spacing: -.3px; color: #eef4ef; text-align: center; white-space: nowrap; }
.green { background: #28804f; width: 108px; -webkit-text-stroke: .25px; }
.blue { background: #2572f5; width: 44px; }
.yellow { background: #ffb905; color: #3b2a0a; width: 86px; }
.red { background: #df4341; width: 101px; }
.legend p { margin: 1px 0 0; line-height: 16px; letter-spacing: -.3px; }
ul { list-style: none; margin: 14px 0 0 4px; padding: 0; }
li { display: flex; align-items: center; gap: 7px; height: 18px; margin-bottom: 8.700px; font: 8.400px Roboto, sans-serif; letter-spacing: -.05px; color: #222; }
.sw { width: 18px; height: 18px; }
.c1 { background: #347fbb; } .c2 { background: #a9d49e; } .c3 { background: #fdf9ae; } .c4 { background: #fdac55; } .c5 { background: #dc240d; }
.legend .routes { margin-top: -3px; }
.line { display: block; width: 20px; height: 20px; margin: 13px 0 0 4px; }
.legend .site { margin-top: 4px; }
.center { flex: 1; display: flex; flex-direction: column; min-width: 0; }
.upper { display: flex; height: 312px; padding-top: 1px; }
.map { position: relative; width: 704px; height: 311px; }
.mapsvg { width: 704px; height: 311px; display: block; }
.rd { fill: none; stroke: #666; stroke-width: 1.800; }
.g { fill: #a9d49e; } .b { fill: #327dbb; } .y { fill: #fef7b2; } .o { fill: #fca857; } .r { fill: #dc280c; }
.gs, .bs, .os, .om, .ob, .yr, .yw, .yx, .ys { fill: none; stroke-linecap: round; stroke-linejoin: round; }
.ys { stroke: #fef7b2; stroke-width: 32; }
.gs { stroke: #a9d49e; stroke-width: 23; }
.bs { stroke: #327dbb; stroke-width: 12; }
.yr { stroke: #fef7b2; stroke-width: 12; }
.yw { stroke: #fef7b2; stroke-width: 9; }
.yx { stroke: #fef7b2; stroke-width: 34; }
.ob { stroke: #fca857; stroke-width: 13; }
.om { stroke: #fca857; stroke-width: 8; }
.os { stroke: #fca857; stroke-width: 4; }
.pts { stroke: #c32613; stroke-width: 4; stroke-linecap: round; }
.park { font: 20px "Open Sans", sans-serif; fill: #3d8fe0; }
.mp { font: 11px "Open Sans", sans-serif; text-anchor: middle; }
.pk { font: 3.800px "Open Sans", sans-serif; text-anchor: middle; fill: #a0625c; }
.g1 { fill: #537a62; } .r1 { fill: #8b5b55; }
.zoom { position: absolute; left: 7px; top: 7px; width: 19px; height: 36px; padding: 1px; background: #d9e4ef; border-radius: 2px; display: flex; flex-direction: column; gap: 1px; }
.zoom span { flex: 1; background: #4b77b0; color: #fff; text-align: center; font-weight: 700; font-size: 11px; line-height: 17px; }
.full { position: absolute; left: 679px; top: 7px; width: 17px; height: 17px; background: #6384b2; color: #fff; font-weight: 700; font-size: 11px; text-align: center; line-height: 17px; }
.three { position: absolute; left: 8px; top: 280px; width: 30px; height: 25px; background: #212529; color: #eee; border-radius: 3px; text-align: center; line-height: 26px; }
.attr { position: absolute; right: 0; bottom: 1px; height: 17px; width: 144px; padding-left: 7px; background: rgba(250,250,250,.85); font-size: 9.300px; line-height: 17px; color: #222; white-space: nowrap; letter-spacing: -.26px; }
.attr a { color: #3478d8; text-decoration: underline; }
.dash { width: 316px; height: 309px; margin-left: 2px; margin-top: 1px; }
.dash h2 { height: 26px; margin: 2px 1px 0; }
.dash h2, .search h2 { line-height: 16px; }
.chart { display: block; margin-left: 1px; letter-spacing: 0; }
.ct { font: 700 9.500px "Open Sans", sans-serif; fill: #222; text-anchor: middle; }
.cl { font: 8.500px "Liberation Sans", sans-serif; fill: #666; }
.cy, .cx { font: 8.500px "Liberation Sans", sans-serif; fill: #666; text-anchor: end; }
.data { padding: 2px 4px 0 2px; flex: 1; display: flex; flex-direction: column; }
.data h2 { height: 25px; margin: 0; border: 1px solid #fbe7ba; line-height: 18px; flex: none; }
.table { height: 182px; margin: 1px 0 2px 1px; }
.actions { display: flex; gap: 3px; padding-left: 1px; }
.edge { position: absolute; right: 0; top: 0; width: 2px; height: 623px; background: linear-gradient(#342b31, #4a2a25 15%, #292b31 40%, #323037); }
.cursor { position: absolute; left: 126px; top: 180px; width: 8px; height: 13px; }
```
